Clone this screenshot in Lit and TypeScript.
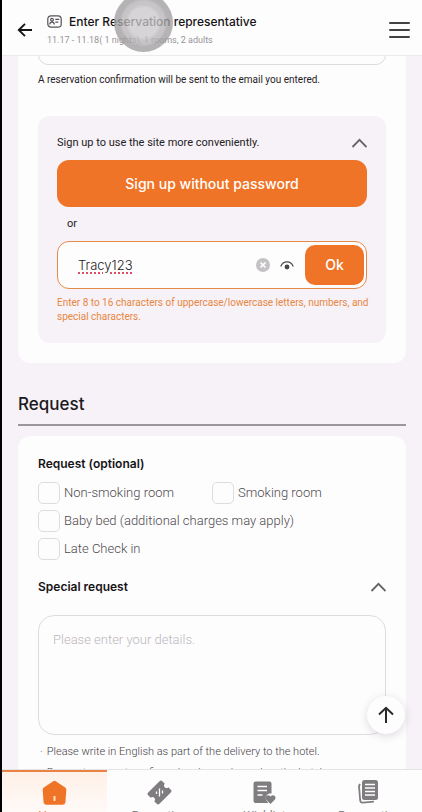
import { LitElement, html, css, svg } from "lit";
import { customElement, state } from "lit/decorators.js";

const chevronUp = html`<svg width="16" height="10" viewBox="0 0 16 10" aria-hidden="true">
  <path d="M1.500 9 8.500 1.800l7 7.200" fill="none" stroke="#666366" stroke-width="1.800" /></svg>`;

const tabIcons = [
  svg`<path d="M11.200 1.200a2.500 2.500 0 0 1 2.600 0l9.400 6.200a2.600 2.600 0 0 1 1.100 2.800l-.9 12.200a3 3 0 0 1-2.900 2.300h-16a3 3 0 0 1-2.900-2.300L.7 10.200a2.600 2.600 0 0 1 1.100-2.800z" fill="#f07427"/><path d="M12.500 16v5" stroke="#ffe3b8" stroke-width="2"/>`,
  svg`<g transform="rotate(-45 12.500 12.500)"><path d="M4.500 4.500h16a2 2 0 0 1 2 2v3.500a2.500 2.500 0 0 0 0 5v3.500a2 2 0 0 1-2 2h-16a2 2 0 0 1-2-2V15a2.500 2.500 0 0 0 0-5V6.500a2 2 0 0 1 2-2z" fill="#807d80"/></g><path d="M12.500 8.500v8M9.500 11.500v2.500M15.500 10.500v3" stroke="#fff" stroke-width="1.300"/>`,
  svg`<path d="M3.500 1.500h14a2 2 0 0 1 2 2v10c-4-.5-7.500 3-5 7l2 2.500h-13a2 2 0 0 1-2-2V3.500a2 2 0 0 1 2-2z" fill="#807d80"/><path d="M5.500 6.500h9.500M5.500 10.500h9.500M5.500 15h5" stroke="#fff" stroke-width="1.500"/><path d="m18.500 24-4.200-4.200c-2.700-3.300 1.800-6.300 4.200-3.300 2.400-3 6.900 0 4.200 3.300z" fill="#807d80"/>`,
  svg`<path d="M3 4 2 6l1.200 14.500a2.500 2.500 0 0 0 2.700 2.200l11-1" fill="none" stroke="#807d80" stroke-width="1.800"/><rect x="5" y="0" width="16" height="20" rx="2.500" fill="#807d80"/><path d="M8 4.500h10M8 8h10M8 11.500h10M8 15h10" stroke="#fff" stroke-width="1.400"/>`,
];

@customElement("app-root")
export class AppRoot extends LitElement {
  static styles = css`
    :host {
      display: flex; flex-direction: column; height: 100vh; overflow: hidden;
      box-sizing: border-box; position: relative;
      border-left: 2px solid #000; background: #f6f2f7; color: #242124;
      font: 400 10px/16px Roboto, "Liberation Sans", sans-serif;
    }
    * { box-sizing: border-box; }
    button, input, textarea { font: inherit; color: inherit; margin: 0; }
    button { border: 0; padding: 0; background: none; display: flex; align-items: center; justify-content: center; }
    svg { display: block; flex: none; }
    h1, h2, h3, p, ul { margin: 0; padding: 0; }
    .header { display: flex; align-items: center; flex: none; height: 56px; padding: 4px 12px 0 15px; background: #fefdfe; border-bottom: 1px solid #eceaec; }
    .heading { flex: 1; padding: 0 0 0 14px; }
    .title { display: flex; align-items: center; gap: 7px; font: 500 12px/20px Inter, sans-serif; color: #161316; }
    .sub { font-size: 9px; line-height: 16px; color: #969396; }
    .main { flex: 1; min-height: 0; overflow: hidden; padding: 0 16px; }
    .card { background: #fefdfe; border-radius: 12px; padding: 19px 20px 20px; }
    .first { margin-top: -55px; }
    .email { display: block; width: 100%; height: 45px; border: 1px solid #dfdcdf; border-radius: 10px; background: #fefdfe; }
    .note { padding: 7px 0 28px; }
    .panel { background: #f6f2f7; border-radius: 12px; padding: 18px 19px; }
    .row { display: flex; justify-content: space-between; align-items: center; }
    .intro { font-size: 11px; line-height: 18px; padding-bottom: 8px; }
    .primary { width: 100%; height: 47px; border-radius: 12px; background: #f07427; color: #fff; font: 500 14px/20px Inter, sans-serif; }
    .or { padding: 9px 10px; font-size: 11px; line-height: 16px; }
    .field { display: flex; align-items: center; height: 48px; border: 1px solid #e58a48; border-radius: 12px; background: #fefdfe; padding: 0 2px 0 20px; }
    .password { flex: 1; min-width: 0; border: 0; padding: 0; background: none; outline: 0; font: 300 13px/20px Inter, sans-serif; text-decoration: underline dotted #dd4d68 2px; text-underline-offset: 2px; }
    .clear { margin-right: 10px; }
    .eye { margin-right: 11px; }
    .ok { width: 59px; height: 40px; border-radius: 10px; background: #f07427; color: #fff; font: 500 14px/20px Inter, sans-serif; }
    .hint { line-height: 14px; color: #e88642; margin-right: -8px; padding: 7px 0 1px; }
    .section { font: 500 17px/24px Inter, sans-serif; color: #1c191c; padding: 29px 0 8px; border-bottom: 2px solid #9b969b; margin-bottom: 10px; }
    h3 { font: 600 12px/18px Inter, sans-serif; color: #161316; }
    .options { display: grid; grid-template-columns: 1fr 1fr; row-gap: 6px; padding: 9px 0 18px; }
    .option { display: flex; align-items: center; gap: 4px; font: 300 13px/22px Roboto, sans-serif; color: #4d4a4d; }
    .wide { grid-column: 1 / -1; }
    .box { appearance: none; width: 22px; height: 22px; border: 1px solid #dfdcdf; border-radius: 5px; background: #fefdfe; margin: 0; }
    .box:checked { background: #f07427; }
    .details { display: block; width: 100%; height: 120px; margin-top: 19px; padding: 14px; border: 1px solid #dfdce0; border-radius: 16px; background: #fefdfe; resize: none; font: 300 13px/20px Roboto, sans-serif; }
    .details::placeholder { color: #bcb7bc; opacity: 1; }
    .tips { list-style: none; padding-top: 9px; font: 300 11px/16px Roboto, sans-serif; color: #444144; }
    .tips li { display: flex; gap: 4px; padding: 0 2px 5px; }
    .tabs { flex: none; display: grid; grid-template-columns: repeat(4, 1fr); height: 43px; overflow: hidden; background: #fefdfe; border-top: 1px solid #e5e3e5; }
    .tab { display: flex; flex-direction: column; align-items: center; gap: 3px; height: 60px; padding-top: 10px; text-decoration: none; font: 400 12px/16px Roboto, sans-serif; color: #868386; }
    .active { padding-top: 8px; border-top: 2px solid #e88343; background: linear-gradient(#fff1e8, #fefdfe); color: #f07427; }
    .top { position: absolute; right: 17px; bottom: 78px; width: 38px; height: 38px; border-radius: 50%; background: #fefdfe; box-shadow: 0 2px 8px #4030402e; }
    .touch { position: absolute; left: 112px; top: -7px; width: 59px; height: 59px; border-radius: 50%; background: radial-gradient(circle closest-side, #c9c7c9c0 0 50%, #b4b2b4c0 62% 72%, #a09ea0c8 82%); pointer-events: none; }
  `;

  @state() private password = "Tracy123";

  render() {
    return html`
      <header class="header">
        <button aria-label="Back"><svg width="16" height="16" viewBox="0 0 16 16"><path d="M15 8H2M8 1.800 1.800 8 8 14.200" fill="none" stroke="#161316" stroke-width="1.900" /></svg></button>
        <div class="heading">
          <h1 class="title">
            <svg width="15" height="13" viewBox="0 0 15 13" aria-hidden="true"><g fill="none" stroke="#555255" stroke-width="1.200"><rect x=".8" y=".8" width="13.400" height="11.400" rx="3.200"/><circle cx="5" cy="4.800" r="1.400"/><path d="M2.600 9.500c.4-3.200 4.400-3.200 4.800 0M8.300 4.300h4M8.300 7.200h3"/></g></svg>
            Enter Reservation representative
          </h1>
          <p class="sub">11.17 - 11.18( 1 nights), 1 rooms, 2 adults</p>
        </div>
        <button aria-label="Menu"><svg width="21" height="18" viewBox="0 0 21 18"><path d="M1 2h19M1 9h19M1 16h19" stroke="#444144" stroke-width="2" stroke-linecap="round" /></svg></button>
      </header>
      <main class="main">
        <section class="card first">
          <input class="email" type="email" aria-label="Email" />
          <p class="note">A reservation confirmation will be sent to the email you entered.</p>
          <div class="panel">
            <div class="row intro"><p>Sign up to use the site more conveniently.</p><button aria-label="Collapse sign up">${chevronUp}</button></div>
            <button class="primary">Sign up without password</button>
            <p class="or">or</p>
            <div class="field">
              <input class="password" type="text" aria-label="Password" spellcheck="false" .value=${this.password}
                @input=${(e: Event) => (this.password = (e.target as HTMLInputElement).value)} />
              <button class="clear" aria-label="Clear" @click=${() => (this.password = "")}><svg width="14" height="14" viewBox="0 0 14 14"><circle cx="7" cy="7" r="7" fill="#c5c2c5"/><path d="m4.500 4.500 5 5m0-5-5 5" stroke="#fff" stroke-width="1.700"/></svg></button>
              <button class="eye" aria-label="Show password"><svg width="14" height="9" viewBox="0 0 14 9"><path d="M.8 5.500C3.200-.6 10.800-.6 13.200 5.500" fill="none" stroke="#4a474a" stroke-width="1.200"/><circle cx="7" cy="6" r="2.400" fill="#4a474a"/></svg></button>
              <button class="ok">Ok</button>
            </div>
            <p class="hint">Enter 8 to 16 characters of uppercase/lowercase letters, numbers, and<br />special characters.</p>
          </div>
        </section>
        <h2 class="section">Request</h2>
        <section class="card">
          <h3>Request (optional)</h3>
          <div class="options">
            <label class="option"><input class="box" type="checkbox" />Non-smoking room</label>
            <label class="option"><input class="box" type="checkbox" />Smoking room</label>
            <label class="option wide"><input class="box" type="checkbox" />Baby bed (additional charges may apply)</label>
            <label class="option wide"><input class="box" type="checkbox" />Late Check in</label>
          </div>
          <div class="row"><h3>Special request</h3><button aria-label="Collapse special request">${chevronUp}</button></div>
          <textarea class="details" aria-label="Special request" placeholder="Please enter your details."></textarea>
          <ul class="tips">
            <li><span>·</span>Please write in English as part of the delivery to the hotel.</li>
            <li><span>·</span>Requests are not confirmed and may depend on the hotel.</li>
          </ul>
        </section>
      </main>
      <nav class="tabs">
        ${["Home", "Promotion", "Wishlist", "Reservation"].map((name, i) => html`
          <a class="tab ${i === 0 ? "active" : ""}" href="#${name.toLowerCase()}">
            <svg width="25" height="25" viewBox="0 0 25 25" aria-hidden="true">${tabIcons[i]}</svg>${name}
          </a>`)}
      </nav>
      <button class="top" aria-label="Back to top"><svg width="18" height="18" viewBox="0 0 18 18"><path d="M9 17V2M2 8.500 9 1.800l7 6.700" fill="none" stroke="#2b282b" stroke-width="2" /></svg></button>
      <div class="touch"></div>
    `;
  }
}
